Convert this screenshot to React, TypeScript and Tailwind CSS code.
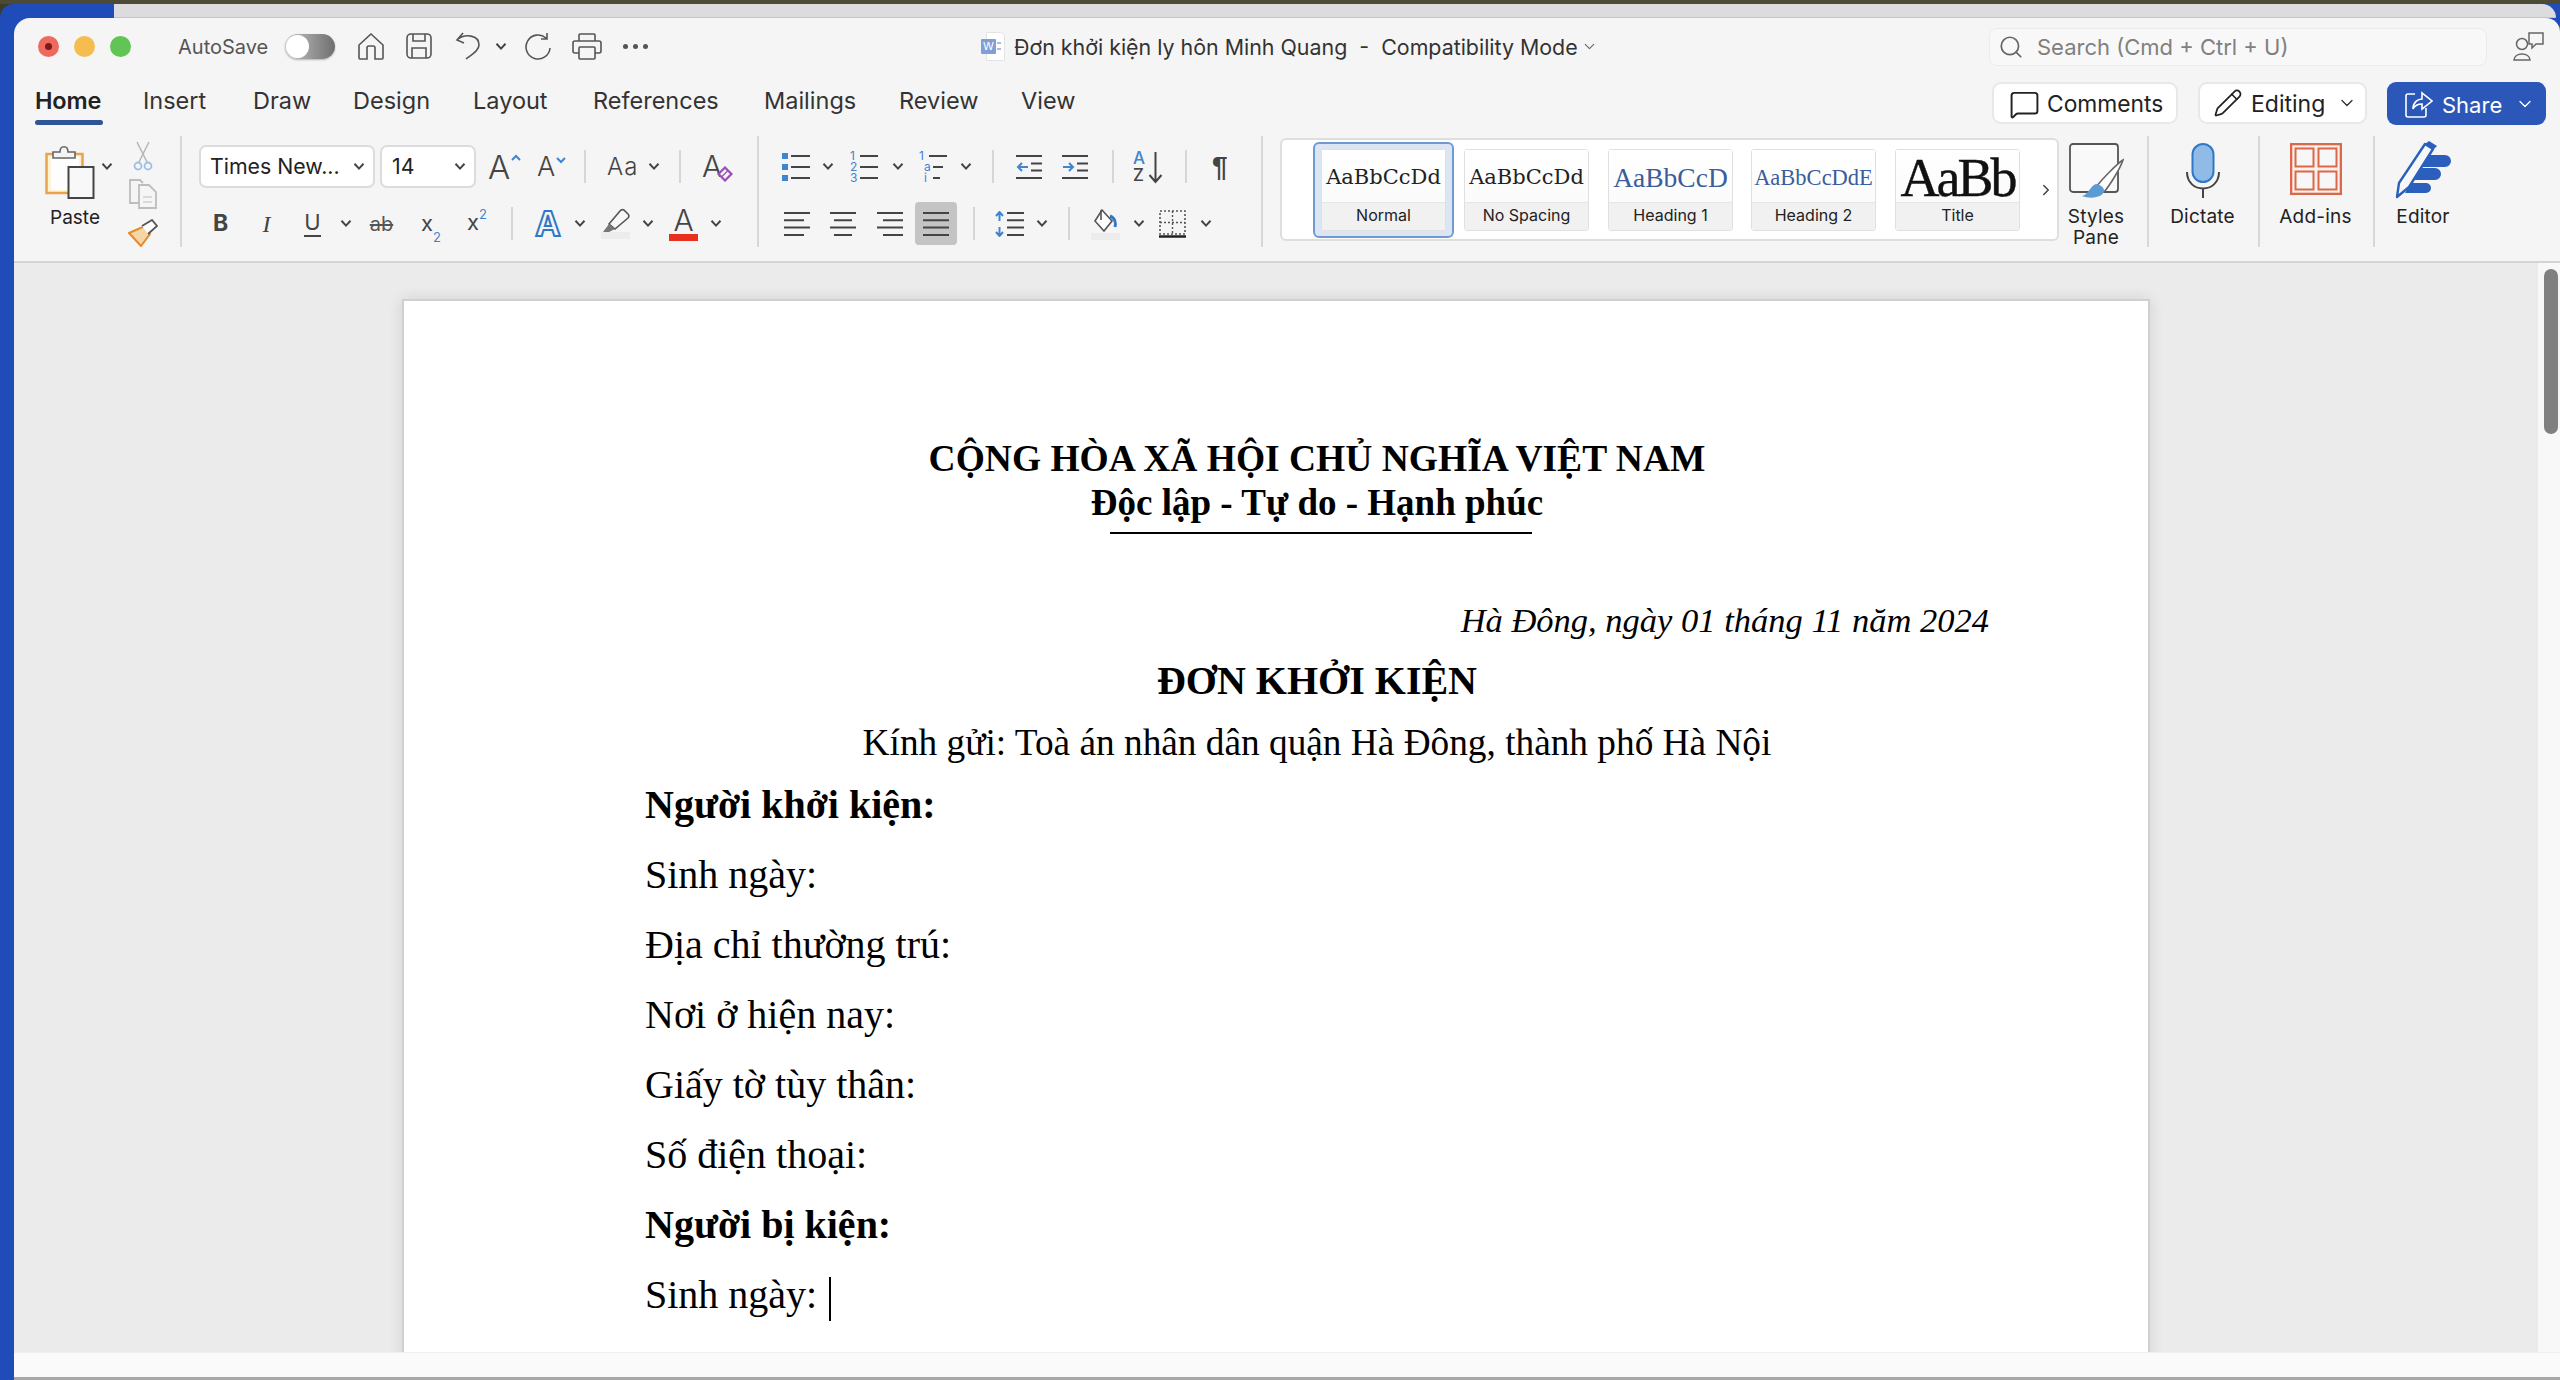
import React from "react";
import { Search, MessageSquare, Pencil, ChevronDown, ChevronRight } from "lucide-react";

type P = { className?: string };
const Chev = ({ className = "" }: P) => (
  <svg width="12" height="9" viewBox="0 0 12 9" className={"shrink-0 " + className}>
    <path d="M1.5 1.8 L6 6.6 L10.5 1.8" fill="none" stroke="#444" strokeWidth="2" />
  </svg>
);
const Sep = ({ className = "" }: P) => <div className={"w-[2px] h-[33px] bg-[#d6d6d6] shrink-0 " + className} />;
const VSep = () => <div className="w-[2px] h-[111px] mt-[1px] bg-[#d8d8d8] shrink-0" />;

const Lines = ({ kind, className = "" }: { kind: "l" | "c" | "r" | "j"; className?: string }) => {
  const rows = { l: [[0, 26], [0, 20], [0, 26], [0, 20]], c: [[0, 26], [4, 22], [0, 26], [4, 22]], r: [[0, 26], [6, 26], [0, 26], [6, 26]], j: [[0, 26], [0, 26], [0, 26], [0, 26]] }[kind];
  return (
    <svg width="26" height="26" viewBox="0 0 26 26" className={"shrink-0 " + className}>
      {rows.map((r, i) => <line key={i} x1={r[0]} x2={r[1]} y1={2 + i * 7.3} y2={2 + i * 7.3} stroke="#444" strokeWidth="2" />)}
    </svg>
  );
};

const ListIcon = ({ kind, className = "" }: { kind: "b" | "n" | "m"; className?: string }) => {
  const labels = kind === "n" ? ["1", "2", "3"] : ["1", "a", "i"];
  return (
    <div className={"w-[28px] h-[33px] flex flex-col shrink-0 " + className}>
      {[0, 1, 2].map((i) => (
        <div key={i} className="h-[11px] flex items-center">
          {kind === "b" ? (
            <div className="w-[6px] h-[6px] bg-[#3f85cf] shrink-0 mr-[3px]" />
          ) : (
            <span className={"text-[12px] leading-[11px] text-[#3f85cf] shrink-0 text-left " + (kind === "m" && i > 0 ? "w-[14px] pl-[5px]" : "w-[10px]")}>{labels[i]}</span>
          )}
          <div className={"h-[2px] bg-[#444] " + (kind === "m" && i === 1 ? "w-[10px]" : kind === "m" && i === 2 ? "w-[7px]" : "flex-1")} />
        </div>
      ))}
    </div>
  );
};

const Indent = ({ dir, className = "" }: { dir: "in" | "out"; className?: string }) => (
  <svg width="26" height="26" viewBox="0 0 26 26" className={"shrink-0 " + className}>
    <line x1="0" x2="26" y1="2" y2="2" stroke="#444" strokeWidth="2" />
    <line x1="0" x2="26" y1="24" y2="24" stroke="#444" strokeWidth="2" />
    <line x1="15" x2="26" y1="9.5" y2="9.5" stroke="#444" strokeWidth="2" />
    <line x1="15" x2="26" y1="16.5" y2="16.5" stroke="#444" strokeWidth="2" />
    {dir === "out" ? <path d="M12 13H2M6 9l-4 4 4 4" fill="none" stroke="#3f85cf" strokeWidth="2" /> : <path d="M1 13h10M7 9l4 4-4 4" fill="none" stroke="#3f85cf" strokeWidth="2" />}
  </svg>
);

const Card = ({ label, className = "", preview }: { label: string; className?: string; preview: React.ReactNode }) => (
  <div className={"w-[125px] h-[82px] shrink-0 flex flex-col rounded-[3px] border border-[#e0e0e0] " + className}>
    <div className="h-[55px] pt-[4px] bg-linear-to-b from-[#ffffff] to-[#fbfbfb] flex items-center justify-center whitespace-nowrap">{preview}</div>
    <div className="flex-1 bg-[#f1f1f1] border-t border-[#e6e6e6] flex items-center justify-center pb-[3px] text-[16px] text-[#222]">{label}</div>
  </div>
);

const Tab = ({ w, children }: { w: string; children: string }) => (
  <div className={"text-[23.5px] leading-[28px] text-[#333] " + w}>{children}</div>
);

const Big = ({ w, label, children }: { w: string; label: React.ReactNode; children: React.ReactNode }) => (
  <div className={"flex flex-col items-center shrink-0 pt-[8px] " + w}>
    <div className="h-[63px] flex justify-center">{children}</div>
    <div className="text-[19px] leading-[21px] tracking-[0.2px] text-[#222] text-center">{label}</div>
  </div>
);

const Body = ({ children, bold }: { children: React.ReactNode; bold?: boolean }) => (
  <div className={"h-[70px] leading-[70px] whitespace-nowrap " + (bold ? "font-bold" : "")}>{children}</div>
);

export default function App() {
  return (
    <div className="w-[2560px] h-[1380px] overflow-hidden flex flex-col bg-[#3c3a28] font-['Inter',sans-serif]">
      <div className="h-[4px] shrink-0 bg-[#4a4a35]" />
      <div className="flex-1 min-h-0 flex flex-col bg-[#1f4cb9] rounded-tl-[14px]">
        <div className="h-[14px] shrink-0 flex">
          <div className="w-[114px]" />
          <div className="flex-1 bg-[#dcdcdf] border-b border-[#c4c4c8] rounded-tr-[14px] mr-[4px]" />
        </div>
        <div className="flex-1 min-h-0 pl-[14px] flex">
          <div className="flex-1 min-w-0 flex flex-col bg-[#f5f5f5] rounded-tl-[16px] rounded-tr-[14px] overflow-hidden">
            {/* title bar */}
            <div className="h-[56px] shrink-0 flex items-center">
              <div className="ml-[24px] flex gap-[15px]">
                <div className="w-[21px] h-[21px] rounded-full bg-[#ee6a5f] flex items-center justify-center"><div className="w-[7px] h-[7px] rounded-full bg-[#7a1c14]" /></div>
                <div className="w-[21px] h-[21px] rounded-full bg-[#f5bd4f]" />
                <div className="w-[21px] h-[21px] rounded-full bg-[#61c454]" />
              </div>
              <div className="ml-[47px] w-[107px] pt-[2px] text-[20px] text-[#555]">AutoSave</div>
              <div className="w-[50px] h-[25px] rounded-full bg-linear-to-r from-[#c8c8c8] to-[#6f6f6f] p-[1px] shrink-0 shadow-[0_1px_2px_#0004]">
                <div className="w-[23px] h-[23px] rounded-full bg-white" />
              </div>
              <svg width="28" height="27" viewBox="0 0 28 27" className="ml-[22px] shrink-0" fill="none" stroke="#555" strokeWidth="1.6">
                <path d="M14 1 L26 12 V25 a1 1 0 0 1-1 1 H18 V15 a2 2 0 0 0-2-2 H12 a2 2 0 0 0-2 2 V26 H3 a1 1 0 0 1-1-1 V12 Z" />
              </svg>
              <svg width="26" height="26" viewBox="0 0 26 26" className="ml-[21px] shrink-0" fill="none" stroke="#555" strokeWidth="1.6">
                <rect x="1" y="1" width="24" height="24" rx="4" /><path d="M7 1 V8 H19 V1 M6 25 V15 H20 V25" />
              </svg>
              <svg width="26" height="28" viewBox="0 0 26 28" className="ml-[23px] shrink-0" fill="none" stroke="#555" strokeWidth="1.6">
                <path d="M8 1 L2 8 L9 11 M2 8 C10 1 24 3 24 13 C24 19 16 23 11 27" />
              </svg>
              <Chev className="ml-[14px]" />
              <svg width="27" height="27" viewBox="0 0 27 27" className="ml-[18px] shrink-0" fill="none" stroke="#555" strokeWidth="1.6">
                <path d="M21 5 A12 12 0 1 0 25 15 M22 0 V6 H16" />
              </svg>
              <svg width="30" height="27" viewBox="0 0 30 27" className="ml-[20px] shrink-0" fill="none" stroke="#555" strokeWidth="1.6">
                <path d="M7 8 V2 a1 1 0 0 1 1-1 H22 a1 1 0 0 1 1 1 V8 M7 20 H3 a2 2 0 0 1-2-2 V10 a2 2 0 0 1 2-2 H27 a2 2 0 0 1 2 2 V18 a2 2 0 0 1-2 2 H23" /><rect x="7" y="14" width="16" height="12" rx="1" />
              </svg>
              <div className="ml-[21px] flex gap-[5px] shrink-0">
                {[0, 1, 2].map((i) => <div key={i} className="w-[5px] h-[5px] rounded-full bg-[#555]" />)}
              </div>
              <div className="ml-[332px] w-[25px] h-[29px] shrink-0 pl-[6px]">
                <div className="w-[19px] h-[29px] bg-white border border-[#e4e4e4] rounded-tr-[5px] flex items-center pr-[3px]">
                  <div className="-ml-[6px] w-[15px] h-[15px] rounded-[1px] bg-[#7f9fd8] text-white text-[11px] leading-[15px] text-center shrink-0">W</div>
                  <div className="ml-[1px] flex-1 h-[8px] border-y-2 border-[#a9bce0]" />
                </div>
              </div>
              <div className="ml-[9px] w-[569px] pt-[2px] text-[21.4px] text-[#333] whitespace-pre">Đơn khởi kiện ly hôn Minh Quang  -  Compatibility Mode</div>
              <ChevronDown className="w-[17px] h-[17px] text-[#666] shrink-0 -ml-[2px]" strokeWidth={1.6} />
              <div className="ml-[391px] w-[498px] h-[38px] mt-[1px] shrink-0 rounded-[8px] bg-[#f8f8f8] border border-[#ebebeb] flex items-center">
                <Search className="w-[26px] h-[26px] ml-[8px] text-[#666]" strokeWidth={1.6} />
                <span className="ml-[13px] pt-[2px] text-[22px] text-[#808080] whitespace-nowrap">Search (Cmd + Ctrl + U)</span>
              </div>
              <svg width="32" height="30" viewBox="0 0 32 30" className="ml-[26px] shrink-0" fill="none" stroke="#666" strokeWidth="1.5">
                <circle cx="9" cy="13" r="5.5" /><path d="M1 29 C1 21 17 21 17 29 Z" />
                <path d="M16 2 H30 V13 H23 L19 17 V13 H16 Z" />
              </svg>
            </div>
            {/* tab row */}
            <div className="h-[61px] shrink-0 flex items-start">
              <div className="flex pt-[13px] pl-[21px]">
                <div className="w-[108px]">
                  <div className="w-[68px] flex flex-col">
                    <div className="text-[23.5px] leading-[28px] font-semibold text-[#222] tracking-[-0.2px]">Home</div>
                    <div className="h-[5px] mt-[5px] rounded-full bg-[#2f5597]" />
                  </div>
                </div>
                <Tab w="w-[110px]">Insert</Tab>
                <Tab w="w-[100px]">Draw</Tab>
                <Tab w="w-[120px]">Design</Tab>
                <Tab w="w-[120px]">Layout</Tab>
                <Tab w="w-[171px]">References</Tab>
                <Tab w="w-[135px]">Mailings</Tab>
                <Tab w="w-[122px]">Review</Tab>
                <Tab w="w-[60px]">View</Tab>
              </div>
              <div className="ml-auto mr-[14px] pt-[8px] flex gap-[20px]">
                <div className="w-[186px] h-[42px] rounded-[9px] bg-white border-2 border-[#e8e8e8] flex items-center pl-[15px] text-[22.8px] text-[#222]">
                  <MessageSquare className="w-[31px] h-[31px] mr-[7px] mt-[2px] text-[#222] shrink-0" strokeWidth={1.5} /><span className="pt-[3px]">Comments</span>
                </div>
                <div className="w-[169px] h-[42px] rounded-[9px] bg-white border-2 border-[#e8e8e8] flex items-center pl-[13px] text-[23px] text-[#222]">
                  <Pencil className="w-[30px] h-[30px] mr-[8px] text-[#222] shrink-0" strokeWidth={1.4} /><span className="pt-[3px]">Editing</span>
                  <ChevronDown className="w-[20px] h-[20px] ml-[12px] text-[#333] shrink-0" strokeWidth={1.6} />
                </div>
                <div className="w-[159px] h-[43px] rounded-[9px] bg-[#2b57b9] flex items-center pl-[18px] text-[22px] text-white">
                  <svg width="28" height="28" viewBox="0 0 28 28" className="mr-[9px] shrink-0" fill="none" stroke="#fff" strokeWidth="1.6">
                    <path d="M10 4 H3 a2 2 0 0 0-2 2 V25 a2 2 0 0 0 2 2 H19 a2 2 0 0 0 2-2 V18" /><path d="M8 19 C8 12 13 9 17 9 V3 L27 11 L17 19 V14 C13 14 10 15 8 19 Z" />
                  </svg>
                  <span className="pt-[3px]">Share</span>
                  <ChevronDown className="w-[20px] h-[20px] ml-[13px] text-white shrink-0" strokeWidth={1.6} />
                </div>
              </div>
            </div>
            {/* ribbon */}
            <div className="h-[128px] shrink-0 flex border-b-2 border-[#d4d4d4]">
              <div className="w-[166px] shrink-0 flex pl-[31px] pt-[10px]">
                <div className="w-[82px] flex flex-col">
                  <div className="h-[62px] flex">
                    <svg width="50" height="54" viewBox="0 0 50 54" className="shrink-0">
                      <rect x="1.5" y="9" width="36" height="39" fill="#fff3d6" stroke="#e9a24d" strokeWidth="2.5" />
                      <rect x="6" y="12" width="28" height="33" fill="#fdfdfd" />
                      <path d="M8 13 V7 H15 C15 0 23 0 23 7 H30 V13 Z" fill="#f4f4f4" stroke="#666" strokeWidth="1.6" />
                      <rect x="23.5" y="22" width="25" height="31" fill="#f8f8f8" stroke="#444" strokeWidth="2" />
                    </svg>
                    <Chev className="ml-[6px] mt-[17px]" />
                  </div>
                  <div className="w-[60px] text-center text-[19px] leading-[21px] text-[#222]">Paste</div>
                </div>
                <div className="w-[32px] flex flex-col items-center -mt-[4px]">
                  <svg width="20" height="30" viewBox="0 0 20 30" fill="none" className="shrink-0">
                    <path d="M4 1 L14 21 M16 1 L6 21" stroke="#b9b9b9" strokeWidth="1.6" />
                    <circle cx="5" cy="25" r="3.5" stroke="#9cc0e4" strokeWidth="1.8" /><circle cx="15" cy="25" r="3.5" stroke="#9cc0e4" strokeWidth="1.8" />
                  </svg>
                  <svg width="30" height="30" viewBox="0 0 30 30" fill="none" stroke="#bdbdbd" strokeWidth="1.8" className="mt-[8px] shrink-0">
                    <path d="M11 24 H2 V1 H12 L15 4" /><path d="M11 6 H21 L28 13 V29 H11 Z" /><path d="M15 18 H24 M15 23 H24" strokeWidth="1.2" />
                  </svg>
                  <svg width="30" height="28" viewBox="0 0 30 28" className="mt-[10px] shrink-0">
                    <path d="M1 14 L17 7 L22 15 L13 27 Z" fill="#f6d6a5" stroke="#e58a2e" strokeWidth="2" />
                    <path d="M14 7 L24 1 L29 7 L20 15" fill="#fff" stroke="#555" strokeWidth="1.8" />
                  </svg>
                </div>
              </div>
              <VSep />
              {/* font group */}
              <div className="w-[575px] shrink-0 flex flex-col pt-[10px] gap-[14px]">
                <div className="h-[43px] flex items-center">
                  <div className="ml-[17px] w-[176px] h-[43px] rounded-[7px] bg-white border-2 border-[#dcdcdc] flex items-center pl-[9px] pr-[8px] text-[21.3px] text-[#222] shrink-0">
                    <span className="flex-1 whitespace-nowrap">Times New...</span><Chev />
                  </div>
                  <div className="ml-[5px] w-[96px] h-[43px] rounded-[7px] bg-white border-2 border-[#dcdcdc] flex items-center pl-[10px] pr-[8px] text-[21.3px] text-[#222] shrink-0">
                    <span className="flex-1">14</span><Chev />
                  </div>
                  <div className="ml-[12px] w-[34px] h-[38px] flex items-start shrink-0">
                    <span className="w-[23px] text-[33px] leading-[38px] font-light text-[#444]">A</span>
                    <svg width="10" height="8" viewBox="0 0 10 8" className="mt-[6px] shrink-0"><path d="M1 6 L5 2 L9 6" fill="none" stroke="#3f85cf" strokeWidth="2" /></svg>
                  </div>
                  <div className="ml-[15px] w-[29px] h-[34px] flex items-start shrink-0">
                    <span className="w-[19px] text-[27px] leading-[34px] font-light text-[#444]">A</span>
                    <svg width="10" height="8" viewBox="0 0 10 8" className="mt-[6px] shrink-0"><path d="M1 2 L5 6 L9 2" fill="none" stroke="#3f85cf" strokeWidth="2" /></svg>
                  </div>
                  <Sep className="ml-[18px]" />
                  <span className="ml-[21px] w-[31px] text-[24px] font-light text-[#444] whitespace-nowrap tracking-[1px]">Aa</span>
                  <Chev className="ml-[10px]" />
                  <Sep className="ml-[19px]" />
                  <div className="ml-[21px] w-[31px] h-[36px] flex items-start shrink-0">
                    <span className="w-[16px] text-[30px] leading-[34px] font-light text-[#444]">A</span>
                    <svg width="16" height="16" viewBox="0 0 16 16" className="mt-[17px] -ml-[1px] shrink-0"><path d="M1.5 8 L8 1.5 L14.5 8 L8 14.5 Z" fill="#f5f5f5" stroke="#9a4db5" strokeWidth="2.2" /><path d="M4.5 11 L11 4.5" stroke="#9a4db5" strokeWidth="1.2" /></svg>
                  </div>
                </div>
                <div className="h-[43px] flex items-center">
                  <span className="ml-[31px] w-[15px] text-[23px] font-bold text-[#444] text-center shrink-0">B</span>
                  <span className="ml-[32px] w-[13px] text-[24px] italic text-[#444] text-center shrink-0 font-['Liberation_Serif']">I</span>
                  <span className="ml-[31px] w-[17px] text-[22px] text-[#444] text-center shrink-0 border-b-2 border-[#444] leading-[25px]">U</span>
                  <Chev className="ml-[19px]" />
                  <span className="ml-[15px] w-[29px] text-[20px] text-[#555] text-center shrink-0 line-through">ab</span>
                  <span className="ml-[25px] w-[21px] text-[22px] text-[#444] shrink-0 flex items-end">x<span className="text-[13px] text-[#3f85cf] leading-[12px] -mb-[3px]">2</span></span>
                  <span className="ml-[25px] w-[22px] text-[22px] text-[#444] shrink-0 flex items-start leading-[30px] -mt-[4px]">x<span className="text-[13px] text-[#3f85cf] leading-[14px]">2</span></span>
                  <Sep className="ml-[22px]" />
                  <span className="ml-[21px] w-[28px] text-center text-[34px] leading-[38px] font-bold text-[#f5f5f5] shrink-0 [-webkit-text-stroke:2px_#2f78c9]">A</span>
                  <Chev className="ml-[12px]" />
                  <svg width="29" height="32" viewBox="0 0 29 32" className="ml-[15px] shrink-0">
                    <path d="M8 16 L19 3 a3 3 0 0 1 5 0 l3 3 a3 3 0 0 1 0 4 L14 21 Z" fill="#f7f7f7" stroke="#555" strokeWidth="1.6" />
                    <path d="M8 16 L14 21 L8 24 H2 Z" fill="#777" />
                    <rect x="0" y="24" width="29" height="7" fill="#ececec" />
                  </svg>
                  <Chev className="ml-[12px]" />
                  <div className="ml-[15px] w-[29px] flex flex-col items-center shrink-0">
                    <span className="text-[30px] font-light text-[#444] leading-[26px]">A</span>
                    <div className="w-[29px] h-[7px] bg-[#e8301f] mt-[1px]" />
                  </div>
                  <Chev className="ml-[12px]" />
                </div>
              </div>
              <VSep />
              {/* paragraph group */}
              <div className="w-[502px] shrink-0 flex flex-col pt-[10px] gap-[14px]">
                <div className="h-[43px] flex items-center">
                  <ListIcon kind="b" className="ml-[23px]" />
                  <Chev className="ml-[12px]" />
                  <ListIcon kind="n" className="ml-[16px]" />
                  <Chev className="ml-[14px]" />
                  <ListIcon kind="m" className="ml-[15px]" />
                  <Chev className="ml-[13px]" />
                  <Sep className="ml-[20px]" />
                  <Indent dir="out" className="ml-[22px]" />
                  <Indent dir="in" className="ml-[20px]" />
                  <Sep className="ml-[24px]" />
                  <div className="ml-[19px] w-[30px] h-[34px] flex shrink-0">
                    <div className="w-[15px] flex flex-col text-[17px] leading-[17px] font-medium">
                      <span className="text-[#3f85cf]">A</span><span className="text-[#444]">Z</span>
                    </div>
                    <svg width="15" height="34" viewBox="0 0 15 34" className="shrink-0"><path d="M7.5 2 V32 M1.5 25 L7.5 32 L13.5 25" fill="none" stroke="#444" strokeWidth="2" /></svg>
                  </div>
                  <Sep className="ml-[22px]" />
                  <span className="ml-[25px] w-[19px] text-[28px] font-semibold text-[#444] leading-[34px] shrink-0 font-['Liberation_Sans']">¶</span>
                </div>
                <div className="h-[43px] flex items-center">
                  <Lines kind="l" className="ml-[25px]" />
                  <Lines kind="c" className="ml-[20px]" />
                  <Lines kind="r" className="ml-[21px]" />
                  <div className="ml-[12px] w-[42px] h-[43px] rounded-[4px] bg-[#c4c4c4] flex items-center justify-center shrink-0"><Lines kind="j" /></div>
                  <Sep className="ml-[16px]" />
                  <svg width="29" height="26" viewBox="0 0 29 26" className="ml-[20px] shrink-0">
                    {[2, 9.3, 16.6, 24].map((y) => <line key={y} x1="12" x2="29" y1={y} y2={y} stroke="#444" strokeWidth="2" />)}
                    <path d="M4.5 10 V2 M1 5 L4.5 1 L8 5 M4.5 16 V24 M1 21 L4.5 25 L8 21" fill="none" stroke="#3f85cf" strokeWidth="2" />
                  </svg>
                  <Chev className="ml-[12px]" />
                  <Sep className="ml-[20px]" />
                  <svg width="29" height="32" viewBox="0 0 29 32" className="ml-[21px] shrink-0">
                    <path d="M11 2 L21 13 L13 23 L4 13 Z" fill="#fff" stroke="#555" strokeWidth="1.6" />
                    <path d="M10 2 V12" stroke="#555" strokeWidth="1.6" />
                    <path d="M19 8 C24 10 25 15 24 19" fill="none" stroke="#2f78c9" strokeWidth="3" />
                    <rect x="0" y="25" width="29" height="7" fill="#ececec" />
                  </svg>
                  <Chev className="ml-[13px]" />
                  <svg width="27" height="28" viewBox="0 0 27 28" className="ml-[14px] shrink-0">
                    <rect x="1" y="1" width="25" height="23" fill="none" stroke="#555" strokeWidth="1.6" strokeDasharray="2 2" />
                    <path d="M13.5 1 V24 M1 12.5 H26" stroke="#555" strokeWidth="1.4" strokeDasharray="2 2" />
                    <line x1="0" x2="27" y1="26.5" y2="26.5" stroke="#222" strokeWidth="2.4" />
                  </svg>
                  <Chev className="ml-[14px]" />
                </div>
              </div>
              <VSep />
              {/* styles */}
              <div className="ml-[17px] mt-[3px] w-[779px] h-[103px] shrink-0 bg-white border-2 border-[#dedede] rounded-[6px] flex items-center pl-[31px]">
                <div className="w-[141px] h-[96px] shrink-0 rounded-[6px] border-2 border-[#6f9bd1] bg-[#dce6f3] flex items-center justify-center">
                  <Card label="Normal" preview={<span className="text-[21px] text-[#222] font-['DejaVu_Serif'] font-light">AaBbCcDd</span>} />
                </div>
                <Card label="No Spacing" className="ml-[10px]" preview={<span className="text-[21px] text-[#222] font-['DejaVu_Serif']">AaBbCcDd</span>} />
                <Card label="Heading 1" className="ml-[19px]" preview={<span className="text-[27.5px] text-[#3a5d9c] font-['Liberation_Serif']">AaBbCcD</span>} />
                <Card label="Heading 2" className="ml-[18px]" preview={<span className="text-[22.5px] text-[#3a5d9c] font-['Liberation_Serif']">AaBbCcDdE</span>} />
                <Card label="Title" className="ml-[19px]" preview={<span className="text-[54px] leading-[46px] tracking-[-3px] text-[#111] font-['Liberation_Serif'] [-webkit-text-stroke:0.4px_#111]">AaBb</span>} />
                <ChevronRight className="w-[18px] h-[18px] ml-[17px] text-[#444] shrink-0" strokeWidth={2} />
              </div>
              <div className="w-[88px] shrink-0 pr-[14px]">
                <Big w="w-full" label={<>Styles<br />Pane</>}>
                  <svg width="56" height="56" viewBox="0 0 56 56">
                    <rect x="2" y="1" width="48" height="48" rx="3" fill="#f9f9f9" stroke="#555" strokeWidth="1.8" />
                    <path d="M55 17 C50 20 34 36 29 43 L36 49 C42 42 52 26 55 17 Z" fill="#fff" stroke="#666" strokeWidth="1.6" />
                    <path d="M28 41 C34 42 37 46 36 49 C33 55 22 56 14 53 C20 52 22 43 28 41 Z" fill="#5b9bd5" />
                  </svg>
                </Big>
              </div>
              <VSep />
              <Big w="w-[109px] pr-[2px]" label="Dictate">
                <svg width="36" height="56" viewBox="0 0 36 56" fill="none">
                  <rect x="7.5" y="1" width="21" height="38" rx="10.5" fill="#8fbbe6" stroke="#2f78c9" strokeWidth="2" />
                  <path d="M2 29 C2 51 34 51 34 29 M18 45 V55" stroke="#444" strokeWidth="2" />
                </svg>
              </Big>
              <VSep />
              <Big w="w-[113px] pr-[2px]" label="Add-ins">
                <svg width="52" height="52" viewBox="0 0 52 52" fill="none" stroke="#d9694a">
                  <rect x="1" y="1" width="50" height="50" strokeWidth="2.6" fill="#faf0ec" />
                  <rect x="5.5" y="5.5" width="18" height="18" strokeWidth="2" fill="#f7f7f7" /><rect x="28.5" y="5.5" width="18" height="18" strokeWidth="2" fill="#f7f7f7" />
                  <rect x="5.5" y="28.5" width="18" height="18" strokeWidth="2" fill="#f7f7f7" /><rect x="28.5" y="28.5" width="18" height="18" strokeWidth="2" fill="#f7f7f7" />
                </svg>
              </Big>
              <VSep />
              <Big w="w-[96px]" label="Editor">
                <svg width="56" height="58" viewBox="0 0 56 58" className="-mt-[2px]">
                  <path d="M30 14 H50 a6 6 0 0 1 0 12 H24 Z M22 27 H40 a6 6 0 0 1 0 12 H16 Z M16 42 H31 a5 5 0 0 1 0 10 H10 Z" fill="#2b5fbd" />
                  <path d="M2 56 L4 42 L30 3 L38 8 L14 46 Z" fill="#f7f7f7" stroke="#2b5fbd" strokeWidth="2.4" strokeLinejoin="round" />
                  <path d="M30 3 L34 0 L42 5 L38 9 Z" fill="#2b5fbd" />
                </svg>
              </Big>
            </div>
            {/* document area */}
            <div className="flex-1 min-h-0 flex">
              <div className="flex-1 min-w-0 bg-[#ebebeb] overflow-hidden pl-[388px] pt-[36px]">
                <div className="w-[1748px] h-[1100px] bg-white border-t-2 border-x-2 border-[#d0d0d0] shadow-[0_0_14px_#0000001c] pl-[241px] pr-[159px] text-black text-[40px] font-['Liberation_Serif',serif]">
                  <div className="pt-[136px] text-center font-bold">
                    <div className="h-[44px] leading-[44px] whitespace-nowrap text-[37.5px]">CỘNG HÒA XÃ HỘI CHỦ NGHĨA VIỆT NAM</div>
                    <div className="h-[44px] leading-[44px] whitespace-nowrap text-[37px]">Độc lập - Tự do - Hạnh phúc</div>
                    <div className="w-[422px] h-[2px] mt-[7px] ml-[465px] bg-black" />
                  </div>
                  <div className="mt-[56px] h-[60px] leading-[60px] text-right italic whitespace-nowrap text-[34.5px]">Hà Đông, ngày 01 tháng 11 năm 2024</div>
                  <div className="h-[62px] leading-[62px] text-center font-bold whitespace-nowrap">ĐƠN KHỞI KIỆN</div>
                  <div className="h-[62px] leading-[62px] text-center whitespace-nowrap text-[37.3px]">Kính gửi: Toà án nhân dân quận Hà Đông, thành phố Hà Nội</div>
                  <div className="h-[62px] leading-[62px] font-bold whitespace-nowrap">Người khởi kiện:</div>
                  <div className="mt-[4px]">
                    <Body>Sinh ngày:</Body>
                    <Body>Địa chỉ thường trú:</Body>
                    <Body>Nơi ở hiện nay:</Body>
                    <Body>Giấy tờ tùy thân:</Body>
                    <Body>Số điện thoại:</Body>
                    <Body bold>Người bị kiện:</Body>
                    <Body>Sinh ngày:<span className="inline-block w-[2px] h-[44px] ml-[12px] bg-black align-middle" /></Body>
                    <div className="mt-[5px]"><Body>Chúng tôi tự nguyện kết hôn với nhau và cùng ở tại nhà bố mẹ từ năm 2015 tại Hà Nội</Body></div>
                  </div>
                </div>
              </div>
              <div className="w-[22px] shrink-0 bg-[#f8f8f8] pl-[6px] pt-[6px]">
                <div className="w-[14px] h-[165px] rounded-full bg-[#808080]" />
              </div>
            </div>
            <div className="h-[25px] shrink-0 bg-[#fafafa] border-t border-[#efefef]" />
            <div className="h-[3px] shrink-0 bg-[#a8a8a8]" />
          </div>
        </div>
      </div>
    </div>
  );
}
